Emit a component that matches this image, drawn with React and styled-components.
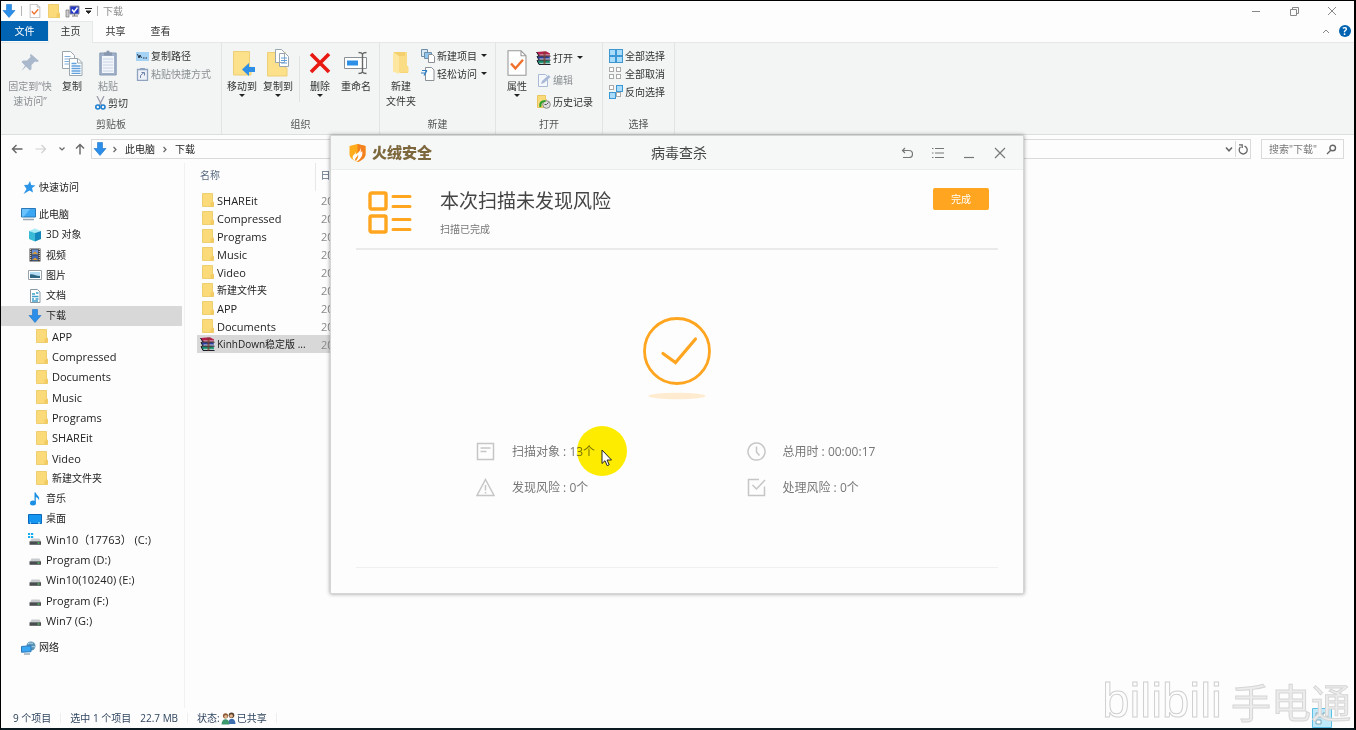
import React from "react"
import styled, { createGlobalStyle } from "styled-components"

const GlobalStyle = createGlobalStyle`
  * { box-sizing: border-box; }
  body { margin: 0; background: #000; }
  button, input {
    font: inherit;
    color: inherit;
    border: 0;
    padding: 0;
    background: none;
  }
  ul { list-style: none; margin: 0; padding: 0; }
  h1, h2, p { margin: 0; font-weight: 400; }
  svg { display: block; flex: none; }
`

const Screen = styled.div`
  position: relative;
  display: flex;
  flex-direction: column;
  min-height: 100vh;
  background: #fdfdfd;
  border: 1px solid #000;
  border-right-width: 2px;
  border-bottom: 2px solid #0b1a20;
  color: #222;
  font: 10px/15px "Open Sans", "Noto Sans CJK SC", sans-serif;
`

/* title bar */

const TitleBar = styled.header`
  display: flex;
  align-items: center;
  height: 20px;
  padding: 0 16px 0 1px;
`

const QuickTools = styled.div`
  display: flex;
  align-items: center;
  flex: 1;
  gap: 5px;
`

const Bar = styled.span`
  width: 1px;
  height: 10px;
  background: #b5b5b5;
`

const WindowTitle = styled.h1`
  font-size: 10px;
  line-height: 15px;
  color: #8c8c8c;
`

const WindowButtons = styled.div`
  display: flex;
  gap: 26px;
  color: #888;
`

const IconButton = styled.button`
  display: flex;
  align-items: center;
  justify-content: center;
  min-width: ${p => p.$w || 12}px;
  height: ${p => p.$h || 16}px;
`

/* ribbon */

const TabRow = styled.nav`
  display: flex;
  align-items: flex-start;
  height: 22px;
  padding-right: 3px;
  border-bottom: 1px solid #e6e8e8;
`

const Tab = styled.button`
  width: ${p => (p.$file ? 47 : 45)}px;
  height: ${p => (p.$active ? 22 : 20)}px;
  padding-bottom: ${p => (p.$active ? 2 : 0)}px;
  color: ${p => (p.$file ? "#fff" : "#333")};
  background: ${p => (p.$file ? "#0063b1" : p.$active ? "#f3f5f5" : "none")};
  border: solid #e6e8e8;
  border-width: ${p => (p.$active ? "1px 1px 0" : "0")};
`

const TabTools = styled.div`
  display: flex;
  align-items: center;
  height: 20px;
  gap: 7px;
  margin-left: auto;
  color: #888;
`

const Help = styled.button`
  width: 12px;
  height: 12px;
  line-height: 12px;
  border-radius: 50%;
  background: #0063b1;
  color: #fff;
  font-weight: 700;
`

const Ribbon = styled.section`
  display: flex;
  height: 92px;
  background: #f3f5f5;
  border-bottom: 1px solid #dcdede;
`

const Group = styled.div`
  display: flex;
  flex-direction: column;
  min-width: ${p => p.$w}px;
  padding: 4px 0 2px;
  border-right: 1px solid #e2e4e4;
`

const GroupBody = styled.div`
  display: flex;
  flex: 1;
  align-items: flex-start;
  padding-left: ${p => p.$pad || 2}px;
`

const GroupName = styled.div`
  text-align: center;
  color: #555;
`

const BigButton = styled.button`
  display: flex;
  flex-direction: column;
  align-items: center;
  width: ${p => p.$w || 36}px;
  color: ${p => (p.$off ? "#8a8f92" : "#333")};
  white-space: nowrap;
`

const BigIcon = styled.span`
  display: flex;
  align-items: center;
  justify-content: center;
  height: 32px;
`

const SmallColumn = styled.div`
  display: flex;
  flex-direction: column;
`

const SmallButton = styled.button`
  display: flex;
  align-items: center;
  gap: 2px;
  height: ${p => p.$h || 18}px;
  padding-left: ${p => p.$pad || 0}px;
  color: ${p => (p.$off ? "#8a8f92" : "#333")};
  white-space: nowrap;
  & > span + svg { margin-left: 2px; }
`

const RibbonRule = styled.span`
  width: 1px;
  height: 46px;
  margin: 9px 2px 0 3px;
  background: #e0e2e2;
`

/* address row */

const AddressRow = styled.div`
  display: flex;
  align-items: center;
  height: 28px;
  padding: 0 10px;
  color: #666;
`

const NavButtons = styled.div`
  display: flex;
  align-items: center;
  gap: 9px;
  width: 80px;
`

const AddressBox = styled.div`
  display: flex;
  flex: 1;
  align-items: center;
  height: 20px;
  padding-left: 1px;
  border: 1px solid #dadada;
  & > svg + svg { margin-left: 6px; }
`

const Crumb = styled.a`
  color: #222;
  text-decoration: none;
  margin: 0 8px;
`

const AddressTools = styled.div`
  display: flex;
  margin-left: auto;
  & > button + button { border-left: 1px solid #dadada; }
`

const SearchBox = styled.label`
  display: flex;
  align-items: center;
  width: 83px;
  height: 20px;
  margin-left: 10px;
  padding: 0 6px 0 7px;
  border: 1px solid #dadada;
  input {
    flex: 1;
    min-width: 0;
    outline: 0;
  }
  input::placeholder { color: #777; opacity: 1; }
`

/* explorer body */

const Explorer = styled.main`
  display: flex;
  flex: 1;
`

const Sidebar = styled.ul`
  display: flex;
  flex-direction: column;
  width: 184px;
  padding: 14px 2px 50px 0;
  border-right: 1px solid #f1f1f1;
`

const TreeItem = styled.li`
  display: flex;
  flex: 1;
  align-items: center;
  gap: ${p => (p.$level ? 4 : 3)}px;
  min-height: 20px;
  margin-top: ${p => (p.$group ? 7 : 0)}px;
  padding-left: ${p => [20, 27, 35][p.$level]}px;
  font-size: ${p => (p.$latin ? 11 : 10)}px;
  background: ${p => (p.$active ? "#d8d8d8" : "none")};
  white-space: nowrap;
`

const FileTable = styled.table`
  flex: 0 1 620px;
  align-self: flex-start;
  table-layout: fixed;
  border-collapse: collapse;
  margin-left: 12px;
  th {
    height: 28px;
    padding: 0 0 4px 3px;
    font-weight: 400;
    text-align: left;
    color: #5a6b80;
  }
  th + th { padding-left: 5px; border-left: 1px solid #e8e8e8; }
  td { height: 18px; padding: 0 0 0 3px; color: #888; font-size: 11px; }
  td + td { padding-left: 6px; }
  col:first-child { width: 118px; }
`

const FileRow = styled.tr`
  background: ${p => (p.$active ? "#d8d8d8" : "none")};
`

const FileName = styled.span`
  display: flex;
  align-items: center;
  gap: 2px;
  height: 18px;
  color: #222;
  font-size: ${p => (p.$latin ? 11 : 10)}px;
  white-space: nowrap;
`

const FileIcon = styled.span`
  display: flex;
  justify-content: center;
  width: 15px;
`

const StatusBar = styled.footer`
  display: flex;
  align-items: center;
  gap: 9px;
  height: 20px;
  padding-left: 12px;
  color: #30455f;
  ${Bar} { background: #eee; }
`

const Share = styled.span`
  display: flex;
  align-items: center;
  gap: 1px;
`

/* antivirus window */

const DialogLayer = styled.div`
  position: absolute;
  inset: 0;
  display: flex;
  align-items: flex-start;
  justify-content: center;
  padding: 134px 1px 0 0;
`

const Dialog = styled.section`
  flex: 0 1 694px;
  background: #fdfdfd;
  border: 1px solid #d4d6d6;
  box-shadow: 0 0 4px rgba(0, 0, 0, 0.4);
`

const DialogBar = styled.header`
  display: grid;
  grid-template-columns: 1fr auto 1fr;
  align-items: center;
  height: 34px;
  padding: 0 14px 0 18px;
  background: #f6f8f8;
  border-bottom: 1px solid #eceeee;
`

const Brand = styled.div`
  display: flex;
  align-items: center;
  gap: 6px;
  font-size: 15px;
  font-weight: 900;
  color: #7d673c;
`

const DialogTitle = styled.h2`
  font-size: 14px;
  line-height: 20px;
  color: #444;
`

const DialogButtons = styled.div`
  display: flex;
  justify-content: flex-end;
  gap: 13px;
  color: #777;
`

const Summary = styled.div`
  display: flex;
  align-items: flex-start;
  margin: 0 25px;
  padding: 18px 9px 11px 12px;
  border-bottom: 2px solid #eaeaea;
`

const SummaryIcon = styled.div`
  padding-top: 3px;
`

const SummaryText = styled.div`
  flex: 1;
  margin-left: 28px;
  h2 { font-size: 19px; line-height: 26px; color: #444; }
  p { margin-top: 8px; color: #777; }
`

const DoneButton = styled.button`
  width: 56px;
  height: 22px;
  border-radius: 2px;
  background: #ffa51f;
  color: #fff;
`

const Result = styled.div`
  display: flex;
  justify-content: center;
  padding: 66px 0 33px;
`

const Stats = styled.ul`
  display: grid;
  grid-template-columns: 1fr 1fr;
  margin: 0 6px 0 145px;
`

const Stat = styled.li`
  display: flex;
  align-items: center;
  gap: 17px;
  height: 36px;
  font-size: 12px;
  color: #777;
`

const DialogFoot = styled.footer`
  height: 26px;
  margin: 62px 25px 0;
  border-top: 1px solid #f0f0f0;
`

const Pointer = styled.div`
  position: absolute;
  left: 576px;
  top: 425px;
  width: 50px;
  height: 50px;
  border-radius: 50%;
  background: #ffee00;
  mix-blend-mode: multiply;
`

const Arrow = styled.div`
  position: absolute;
  left: 600px;
  top: 448px;
`

const Watermark = styled.div`
  position: absolute;
  right: 3px;
  bottom: 0;
  display: flex;
  align-items: flex-end;
  gap: 9px;
  white-space: nowrap;
`

const WatermarkLogo = styled.span`
  font: 49px/56px "Liberation Sans", sans-serif;
  color: #fdfdfd;
  -webkit-text-stroke: 1px #d0d0d0;
`

const WatermarkName = styled.span`
  font: 40px/48px "Liberation Sans", "Noto Sans CJK SC", sans-serif;
  color: #ececec;
  -webkit-text-stroke: 1px #d6d6d6;
`

const ViewToggle = styled.div`
  position: absolute;
  right: 22px;
  bottom: 0;
`

/* icons */

const Line = ({ d, w = 12, h = 12, sw = 1, color = "currentColor", fill = "none" }) => (
  <svg width={w} height={h} viewBox={`0 0 ${w} ${h}`} fill={fill} stroke={color} strokeWidth={sw}>
    <path d={d} />
  </svg>
)

const Caret = () => (
  <svg width="6" height="4" viewBox="0 0 6 4"><path d="M0 0h6L3 3z" fill="#222" /></svg>
)

const DownArrow = () => (
  <svg width="14" height="14" viewBox="0 0 14 14">
    <path d="M4.5 .5h5v6H13L7 13.500 1 6.500h3.500z" fill="#2b8ee8" stroke="#1d74c8" strokeWidth=".6" />
  </svg>
)

const Folder = () => (
  <svg width="12" height="14" viewBox="0 0 12 14">
    <path d="M.5.500h10v8.500h1v4.500H.5z" fill="#fbdb79" stroke="#e9c65e" strokeWidth=".8" />
    <path d="M8.500 9.500h3v4h-3z" fill="#f3ca62" />
  </svg>
)

const Books = () => (
  <svg width="15" height="14" viewBox="0 0 15 14">
    <path d="M.5 1L10 .3l4 2.200v2.500H3z" fill="#b3204d" />
    <path d="M1 5.500h11l2 1v2H3z" fill="#2b3fa0" />
    <path d="M1 9.500h11l2 1v3H3z" fill="#128a6a" />
    <path d="M3.500 4h10.500M3.500 8h10.500M3.500 12.300h10.500" stroke="#e8e8e8" strokeWidth=".9" />
    <path d="M.5 1l2.500 4-2 .5 2 3.500-2 .5 2 4M3 5.200h11.500M3 9.200h11.500M3 13.500h11.500" stroke="#1c1c28" strokeWidth="1" fill="none" />
    <path d="M7.500 .5l2 .5v12.500h-2z" fill="#7a3f2a" opacity=".7" />
  </svg>
)

const CheckDoc = ({ w = 12, h = 14 }) => (
  <svg width={w} height={h} viewBox="0 0 18 24">
    <path d="M.7.700h12l4.600 4.600v18H.7z" fill="#fff" stroke="#999" />
    <path d="M12.700.700v4.600h4.600" fill="none" stroke="#999" />
    <path d="M3.500 12.500l4 4.500 7-8" fill="none" stroke="#f0702a" strokeWidth="2.200" />
  </svg>
)

const PcCheck = () => (
  <svg width="15" height="13" viewBox="0 0 15 13">
    <path d="M1 5h3v7H1z" fill="#ccc" stroke="#777" strokeWidth=".7" />
    <path d="M5 1h9v8H5z" fill="#2438c8" stroke="#889" />
    <path d="M7 11h6M9.500 9v2" stroke="#777" />
    <path d="M7 4.500l2 2.500 3.500-4.500" fill="none" stroke="#fff" strokeWidth="1.400" />
  </svg>
)

const Pin = () => (
  <svg width="20" height="20" viewBox="0 0 20 20">
    <path d="M11 1l8 7-2 1-2-.5-3.500 3.500 0 4-1.500 1.500-4-4L1 18.500 1.500 18 5 12.500l-3.500-3.500L3 7.500h4L10.500 4l-.5-2z" fill="#aab8cb" />
  </svg>
)

const Copies = ({ w = 21, h = 25 }) => (
  <svg width={w} height={h} viewBox="0 0 21 25">
    <path d="M.5.500h8l4 4v13H.5z" fill="#fff" stroke="#9aa6ae" />
    <path d="M2.500 5.500h6M2.500 8h8M2.500 10.500h8M2.500 13h8" stroke="#7fb0dd" />
    <path d="M7.500 7.500h8.500l4 4v13H7.500z" fill="#fff" stroke="#9aa6ae" />
    <path d="M15.500 7.500v4.500h4.500" fill="none" stroke="#9aa6ae" />
    <path d="M9.500 12.500h5M9.500 15h9M9.500 17.500h9M9.500 20h9M9.500 22.300h9" stroke="#5fa0dd" strokeWidth="1.300" />
  </svg>
)

const Clipboard = () => (
  <svg width="18" height="26" viewBox="0 0 18 26">
    <path d="M.8 3h16.400v22H.8z" fill="#9fb0c8" stroke="#8b9cb5" />
    <path d="M3 6h12v17H3z" fill="#f2f5fa" />
    <path d="M5 5.500V2.500h2.500V.800h3v1.700H13v3z" fill="#8796ad" />
    <path d="M4 9h10M4 12h10M4 15h10M4 18h10M4 21h10" stroke="#c9d4e4" />
  </svg>
)

const Scissors = () => (
  <svg width="11" height="14" viewBox="0 0 11 14" fill="none">
    <path d="M2 0l4.500 9M9 0L4.500 9" stroke="#99a" strokeWidth="1.200" />
    <circle cx="2.800" cy="11" r="2" stroke="#1f7fd0" strokeWidth="1.600" />
    <circle cx="8" cy="11" r="2" stroke="#1f7fd0" strokeWidth="1.600" />
  </svg>
)

const PathIcon = () => (
  <svg width="13" height="9" viewBox="0 0 13 9">
    <path d="M0 0h13v9H0z" fill="#a5d3f5" />
    <path d="M1.500 2l1.500 4 1-3 1.500 3M7 6h1.500M9.500 6H11" stroke="#234" fill="none" />
  </svg>
)

const PasteLink = () => (
  <svg width="13" height="13" viewBox="0 0 13 13">
    <path d="M1.500 1.500h10v11h-10z" fill="#eef2f8" stroke="#8fa2c0" strokeWidth="1.300" />
    <path d="M4 0h5v2H4z" fill="#8fa2c0" />
    <path d="M4.500 10V7.500l3.500-3M5.500 4.500H8.500v3" fill="none" stroke="#6a83ad" />
  </svg>
)

const MoveTo = () => (
  <svg width="26" height="26" viewBox="0 0 26 26">
    <path d="M4.500 1.500h16v15.500h1.500v8H4.500z" fill="#fce08a" stroke="#edcf77" />
    <path d="M26 17h-6v-4l-7 6.500 7 6.500v-4h6z" fill="#2d8fe6" />
  </svg>
)

const CopyTo = () => (
  <svg width="26" height="28" viewBox="0 0 26 28">
    <path d="M2.500 3.500h18v15.500h1.500v8H2.500z" fill="#fce08a" stroke="#edcf77" />
    <path d="M10.500.500h6l3 3v10h-9zM14.500 4.500h6l3 3v10h-9z" fill="#fff" stroke="#98a6b2" />
    <path d="M16 9h6M16 11.500h6M16 14h6" stroke="#5fa0dd" />
  </svg>
)

const Rename = () => (
  <svg width="26" height="24" viewBox="0 0 26 24" fill="none">
    <path d="M1.500 6.500h22v11h-22z" fill="#fff" stroke="#8a9096" />
    <path d="M4 9.500h11v5H4z" fill="#2d8fe6" />
    <path d="M15.500 1.500c2.500 0 3.500.5 4 1.500.5-1 1.500-1.500 4-1.500M19.500 3v18M15.500 22.500c2.500 0 3.500-.5 4-1.500.5 1 1.500 1.500 4 1.500" stroke="#666" strokeWidth="1.400" />
  </svg>
)

const NewFolder = () => (
  <svg width="18" height="24" viewBox="0 0 18 24">
    <path d="M2 1h13v14h1v7H8z" fill="#f3cf6e" />
    <path d="M1 1l6 4v18l-6-2.500z" fill="#fde7a0" />
    <path d="M7 5h6V1h2v14l1.500 1v5.500H7z" fill="#f9dc84" />
  </svg>
)

const NewItem = () => (
  <svg width="14" height="14" viewBox="0 0 14 14">
    <path d="M.5.500h6v7h-6z" fill="#d5e9f8" stroke="#6f8ea5" />
    <path d="M3.500 3.500h7v6h-7z" fill="#8cc6f0" stroke="#6f8ea5" />
    <path d="M7.500 5.500h4l2 2v6h-6z" fill="#fff" stroke="#8a9096" />
  </svg>
)

const EasyAccess = () => (
  <svg width="14" height="14" viewBox="0 0 14 14">
    <path d="M4.500.500h6l2.500 2.500v10.500H4.500z" fill="#fff" stroke="#8a9096" />
    <path d="M0 6h4M1 3.500h5M3 8.500l3-5" stroke="#2d7fc8" strokeWidth="1.200" />
  </svg>
)

const Edit = () => (
  <svg width="14" height="14" viewBox="0 0 14 14">
    <path d="M1.500 1.500h7l2 2v10h-9z" fill="#f4f7fc" stroke="#a9b9d6" />
    <path d="M4 11l1-3 6.500-6 2 2-6.500 6z" fill="#a9b9d6" />
  </svg>
)

const HistoryIcon = () => (
  <svg width="14" height="14" viewBox="0 0 14 14">
    <path d="M.5.500h8v4h1v8H.5z" fill="#fbdb79" stroke="#e9c65e" />
    <circle cx="9.500" cy="9.500" r="3.800" fill="#ddd" stroke="#888" />
    <path d="M9.500 9.500l2-2M9.500 9.500h-2" stroke="#555" fill="none" />
    <path d="M3.500 12c-1-4 1-6 5-6" stroke="#2ca02c" strokeWidth="2.200" fill="none" />
  </svg>
)

const Squares = ({ on }) => (
  <svg width="14" height="14" viewBox="0 0 14 14">
    {[[1, 1], [8, 1], [1, 8], [8, 8]].map(([x, y], i) => (
      <rect key={i} x={x - 0.5} y={y - 0.5} width={on[i] ? 6 : 4} height={on[i] ? 6 : 4}
        fill={on[i] ? "#a9dbfa" : "#fff"} stroke={on[i] ? "#3c97d3" : "#aaa"} />
    ))}
  </svg>
)

const Monitor = () => (
  <svg width="15" height="14" viewBox="0 0 15 14">
    <path d="M.5 1.500h14v8.500H.5z" fill="#3ba7f2" stroke="#2a78b8" />
    <path d="M1 2h8L3 9.500H1z" fill="#6cc2fa" />
    <path d="M2 12.500h11" stroke="#9aa6b0" strokeWidth="1.500" />
  </svg>
)

const Star = () => (
  <svg width="15" height="14" viewBox="0 0 15 14">
    <path d="M9 1l1.200 4 4.300.5-3.500 2.500 1 4.500-3.500-2-6 3.500 3-5L3 5l4-.2z" fill="#2d95e8" />
  </svg>
)

const Cube = () => (
  <svg width="14" height="14" viewBox="0 0 14 14">
    <path d="M1 3l6-2.500L13 3 7 5z" fill="#a8ebf5" />
    <path d="M1 3l6 2v8.500L1 11z" fill="#39bbd8" />
    <path d="M13 3L7 5v8.500l6-2.500z" fill="#1488bd" />
  </svg>
)

const Film = () => (
  <svg width="14" height="14" viewBox="0 0 14 14">
    <path d="M1.500.500h11v13h-11z" fill="#444" />
    <path d="M4 1.500h6v5H4z" fill="#6b8fd0" />
    <path d="M4 7.500h6v5H4z" fill="#3e63b0" />
    <path d="M4 6l3-2.500L10 6zM4 12l3-2.500 3 2.500z" fill="#d49b35" />
    <path d="M2.700 1v12M11.300 1v12" stroke="#ddd" strokeDasharray="1 1" />
  </svg>
)

const Picture = () => (
  <svg width="14" height="14" viewBox="0 0 14 14">
    <path d="M.5 2.500h13v9H.5z" fill="#fff" stroke="#98a2aa" />
    <path d="M2 4h10v6H2z" fill="#b5def5" />
    <path d="M2 6.500c3-1 5 1.500 10 1.500v2H2z" fill="#2e6784" />
  </svg>
)

const DocIcon = () => (
  <svg width="14" height="14" viewBox="0 0 14 14">
    <path d="M2.500.500h7l2.500 2.500v10.500H2.500z" fill="#fff" stroke="#8a98a4" />
    <path d="M4 5h3M8 4h2.500M4 7.500h6.500M4 10h2M7.500 10h3M4 12h6" stroke="#3f9fca" strokeWidth="1.300" />
  </svg>
)

const Note = () => (
  <svg width="14" height="14" viewBox="0 0 14 14">
    <ellipse cx="5" cy="11" rx="3" ry="2.500" fill="#1a8fe3" />
    <path d="M6.500 11V.500h1.300c.5 3 4.500 3.500 3.200 8-.5-2-1.500-3-3.200-3.500v6z" fill="#1a8fe3" />
  </svg>
)

const Desktop = () => (
  <svg width="14" height="14" viewBox="0 0 14 14">
    <path d="M.5 2.500h13v9H.5z" fill="#1596f0" stroke="#0a69b8" />
    <path d="M2 11h1M10 11h2" stroke="#dff" />
  </svg>
)

const Drive = ({ win }) => (
  <svg width="14" height="14" viewBox="0 0 14 14">
    <path d="M3.500 6.500h8l1.500 3H2z" fill="#c8cbcd" />
    <path d="M1.500 9.300h11.500v3.500H1.500z" fill="#4a4d50" />
    <path d="M9.500 11h2" stroke="#52d36a" strokeWidth="1.200" />
    {win && <path d="M0 1h2.200v2H0zM3 1h2.200v2H3zM0 4h2.200v2H0zM3 4h2.200v2H3z" fill="#18aef0" />}
  </svg>
)

const Network = () => (
  <svg width="15" height="14" viewBox="0 0 15 14">
    <circle cx="10" cy="5" r="4.500" fill="#5d93b5" />
    <path d="M7 3c2-2 3 0 5-1M9 6c2 0 3-1 5 0" stroke="#bfe0ee" fill="none" />
    <path d="M.5 5.500l9.500-.8v6l-9.500.5z" fill="#3ba7f2" stroke="#2a78b8" />
    <path d="M3 13h6" stroke="#8fa6b5" strokeWidth="1.400" />
  </svg>
)

const People = () => (
  <svg width="15" height="13" viewBox="0 0 15 13">
    <circle cx="4.500" cy="3.800" r="2.600" fill="#8a5a36" />
    <circle cx="10.500" cy="3.300" r="2.800" fill="#59422f" />
    <circle cx="10.200" cy="4" r="1.800" fill="#e2b48d" />
    <circle cx="4.800" cy="4.500" r="1.600" fill="#e2b48d" />
    <path d="M7 12c0-7 7.500-7 7.500 0z" fill="#3d6fae" />
    <path d="M.5 12.500c0-7 8-7 8 0z" fill="#3c9a6e" />
  </svg>
)

const Shield = () => (
  <svg width="17" height="18" viewBox="0 0 17 18">
    <path d="M8.500 0L16.500 2v8c0 4-4 6.500-8 8-4-1.500-8-4-8-8V2z" fill="#ffad1c" />
    <path d="M8.500 0L16.500 2v8c0 4-4 6.500-8 8z" fill="#f4811f" />
    <path d="M12 3c.3 3-.5 4-.3 5.500.8-.2 1.200-1 1.200-2 1.500 4-.5 8-5.400 11.300C4 16 3.500 14 3.700 12.500 4.500 10.500 6 10.500 6.500 8c.4 1.500.2 2 .2 2.500C9 9 12 6.500 12 3z" fill="#fff" />
    <path d="M6 16c0-2 2.500-3.500 3-5.500.8 2-.5 4.500-2 6.500z" fill="#f79322" />
  </svg>
)

const ScanList = () => (
  <svg width="44" height="44" viewBox="0 0 44 44" fill="none" stroke="#ffa51f" strokeLinecap="round">
    <rect x="2" y="2" width="16" height="16" rx="1.500" strokeWidth="3.400" />
    <rect x="2" y="25" width="16" height="16" rx="1.500" strokeWidth="3.400" />
    <path d="M25 5.500h17M25 15.500h17M25 28.500h17M25 38.500h17" strokeWidth="3" />
  </svg>
)

const SuccessMark = () => (
  <svg width="70" height="84" viewBox="0 0 70 84" fill="none">
    <circle cx="35" cy="35" r="32.500" stroke="#ffa51f" strokeWidth="2.800" />
    <path d="M21 37.500L33.500 46.500 53.500 23" stroke="#ffa51f" strokeWidth="3.200" strokeLinecap="round" />
    <ellipse cx="35" cy="80" rx="28.500" ry="3.300" fill="#ffecd0" />
  </svg>
)

const StatIcon = ({ d }) => (
  <svg width="19" height="19" viewBox="0 0 19 19" fill="none" stroke="#c6c6c6" strokeWidth="1.500">
    <path d={d} />
  </svg>
)

/* data */

const tree = [
  [0, "快速访问", Star],
  [0, "此电脑", Monitor],
  [1, "3D 对象", Cube],
  [1, "视频", Film],
  [1, "图片", Picture],
  [1, "文档", DocIcon],
  [1, "下载", DownArrow],
  [2, "APP", Folder],
  [2, "Compressed", Folder],
  [2, "Documents", Folder],
  [2, "Music", Folder],
  [2, "Programs", Folder],
  [2, "SHAREit", Folder],
  [2, "Video", Folder],
  [2, "新建文件夹", Folder],
  [1, "音乐", Note],
  [1, "桌面", Desktop],
  [1, "Win10（17763） (C:)", () => <Drive win />],
  [1, "Program (D:)", Drive],
  [1, "Win10(10240) (E:)", Drive],
  [1, "Program (F:)", Drive],
  [1, "Win7 (G:)", Drive],
  [0, "网络", Network],
]

const files = [
  "SHAREit", "Compressed", "Programs", "Music", "Video",
  "新建文件夹", "APP", "Documents", "KinhDown稳定版 ...",
]

const stats = [
  ["扫描对象 : 13个", "M1.500 1.500h16v16h-16zM4.500 6h10M4.500 9.500h6"],
  ["总用时 : 00:00:17", "M9.500 1a8.500 8.500 0 1 0 .01 0zM9.500 4.500v5.500l3 3.500"],
  ["发现风险 : 0个", "M9.500 1.500l8.500 16h-17zM9.500 7v5.500M9.500 14v1.500"],
  ["处理风险 : 0个", "M12 1.500H1.500v16h16V8.500M5.500 7l4 4L18 2"],
]

const isLatin = text => /^[A-Za-z]/.test(text)

function Big({ icon, lines, caret, w, off }) {
  return (
    <BigButton $w={w} $off={off}>
      <BigIcon>{icon}</BigIcon>
      {lines.map(line => <span key={line}>{line}</span>)}
      {caret && <Caret />}
    </BigButton>
  )
}

function Small({ icon, text, caret, ...rest }) {
  return (
    <SmallButton {...rest}>
      {icon}
      <span>{text}</span>
      {caret && <Caret />}
    </SmallButton>
  )
}

function RibbonBar() {
  return (
    <Ribbon>
      <Group $w={221}>
        <GroupBody $pad={6}>
          <Big icon={<Pin />} lines={["固定到“快", "速访问”"]} w={46} off />
          <Big icon={<Copies />} lines={["复制"]} w={38} />
          <SmallColumn>
            <Big icon={<Clipboard />} lines={["粘贴"]} w={34} off />
            <Small icon={<Scissors />} text="剪切" $pad={4} />
          </SmallColumn>
          <SmallColumn>
            <Small icon={<PathIcon />} text="复制路径" $pad={8} />
            <Small icon={<PasteLink />} text="粘贴快捷方式" $pad={8} $off />
          </SmallColumn>
        </GroupBody>
        <GroupName>剪贴板</GroupName>
      </Group>
      <Group $w={158}>
        <GroupBody>
          <Big icon={<MoveTo />} lines={["移动到"]} caret />
          <Big icon={<CopyTo />} lines={["复制到"]} caret />
          <RibbonRule />
          <Big icon={<Line w={22} h={22} d="M2 2l18 18M20 2L2 20" sw={3.6} color="#e81a12" />} lines={["删除"]} caret />
          <Big icon={<Rename />} lines={["重命名"]} />
        </GroupBody>
        <GroupName>组织</GroupName>
      </Group>
      <Group $w={116}>
        <GroupBody>
          <Big icon={<NewFolder />} lines={["新建", "文件夹"]} w={38} />
          <SmallColumn>
            <Small icon={<NewItem />} text="新建项目" caret $pad={1} />
            <Small icon={<EasyAccess />} text="轻松访问" caret $pad={1} />
          </SmallColumn>
        </GroupBody>
        <GroupName>新建</GroupName>
      </Group>
      <Group $w={107}>
        <GroupBody>
          <Big icon={<CheckDoc w={20} h={26} />} lines={["属性"]} caret w={38} />
          <SmallColumn>
            <Small icon={<Books />} text="打开" caret $h={22} />
            <Small icon={<Edit />} text="编辑" $h={22} $pad={1} $off />
            <Small icon={<HistoryIcon />} text="历史记录" $h={22} $pad={1} />
          </SmallColumn>
        </GroupBody>
        <GroupName>打开</GroupName>
      </Group>
      <Group $w={72}>
        <GroupBody $pad={6}>
          <SmallColumn>
            <Small icon={<Squares on={[1, 1, 1, 1]} />} text="全部选择" />
            <Small icon={<Squares on={[0, 0, 0, 0]} />} text="全部取消" />
            <Small icon={<Squares on={[0, 1, 1, 0]} />} text="反向选择" />
          </SmallColumn>
        </GroupBody>
        <GroupName>选择</GroupName>
      </Group>
    </Ribbon>
  )
}

function ScanDialog() {
  return (
    <DialogLayer>
      <Dialog>
        <DialogBar>
          <Brand><Shield />火绒安全</Brand>
          <DialogTitle>病毒查杀</DialogTitle>
          <DialogButtons>
            <IconButton $w={18} aria-label="返回"><Line w={12} h={12} d="M4 1L1.500 3.500 4 6M1.500 3.500h6.500a3.300 3.300 0 0 1 0 7H2" sw={1.2} /></IconButton>
            <IconButton $w={18} aria-label="菜单"><Line w={12} h={12} d="M0 1.500h1.500M3 1.500h9M0 6h1.500M3 6h9M0 10.500h1.500M3 10.500h9" sw={1.2} /></IconButton>
            <IconButton $w={18} aria-label="最小化"><Line w={12} h={12} d="M1 10.500h10" sw={1.2} /></IconButton>
            <IconButton $w={18} aria-label="关闭"><Line w={12} h={12} d="M1 1l10 10M11 1L1 11" sw={1.2} /></IconButton>
          </DialogButtons>
        </DialogBar>
        <Summary>
          <SummaryIcon><ScanList /></SummaryIcon>
          <SummaryText>
            <h2>本次扫描未发现风险</h2>
            <p>扫描已完成</p>
          </SummaryText>
          <DoneButton>完成</DoneButton>
        </Summary>
        <Result><SuccessMark /></Result>
        <Stats>
          {stats.map(([text, d]) => (
            <Stat key={text}><StatIcon d={d} />{text}</Stat>
          ))}
        </Stats>
        <DialogFoot />
      </Dialog>
    </DialogLayer>
  )
}

export default function App() {
  return (
    <Screen>
      <GlobalStyle />
      <TitleBar>
        <QuickTools>
          <DownArrow />
          <Bar />
          <IconButton $w={16} aria-label="属性"><CheckDoc /></IconButton>
          <IconButton aria-label="新建文件夹"><Folder /></IconButton>
          <IconButton aria-label="计算机"><PcCheck /></IconButton>
          <IconButton $w={7} aria-label="自定义"><Line w={7} h={6} d="M0 .5h7M1 3h5L3.500 5.500z" fill="#222" color="#222" /></IconButton>
          <Bar />
          <WindowTitle>下载</WindowTitle>
        </QuickTools>
        <WindowButtons>
          <IconButton aria-label="最小化"><Line d="M2 6.500h8" /></IconButton>
          <IconButton aria-label="还原"><Line d="M2.500 4.500h6v6h-6zM4.500 4.500v-2h6v6h-2" /></IconButton>
          <IconButton aria-label="关闭"><Line d="M2 2l8 8M10 2l-8 8" /></IconButton>
        </WindowButtons>
      </TitleBar>
      <TabRow>
        <Tab $file>文件</Tab>
        <Tab $active>主页</Tab>
        <Tab>共享</Tab>
        <Tab>查看</Tab>
        <TabTools>
          <IconButton aria-label="折叠"><Line w={8} h={5} d="M1 4l3-3 3 3" /></IconButton>
          <Help>?</Help>
        </TabTools>
      </TabRow>
      <RibbonBar />
      <AddressRow>
        <NavButtons>
          <IconButton aria-label="后退"><Line d="M11.500 6H1.500M5.500 2l-4 4 4 4" sw={1.4} /></IconButton>
          <IconButton $w={18} aria-label="前进"><Line d="M.5 6h10M6.500 2l4 4-4 4" sw={1.2} color="#d0d0d0" /></IconButton>
          <IconButton $w={6} aria-label="历史"><Line w={6} h={4} d="M.5.500L3 3 5.500.500" sw={1.2} /></IconButton>
          <IconButton aria-label="上移"><Line d="M6 11.500V1.500M2 5.500l4-4 4 4" sw={1.4} /></IconButton>
        </NavButtons>
        <AddressBox>
          <DownArrow />
          <Line w={4} h={7} d="M.5 1L3 3.500.5 6" sw={1.2} />
          <Crumb href="#pc">此电脑</Crumb>
          <Line w={4} h={7} d="M.5 1L3 3.500.5 6" sw={1.2} />
          <Crumb href="#downloads">下载</Crumb>
          <AddressTools>
            <IconButton aria-label="展开"><Line w={8} h={5} d="M1 .5L4 3.800 7 .5" sw={1.5} /></IconButton>
            <IconButton $w={15} aria-label="刷新"><Line w={10} h={11} d="M2.500 3a4 4 0 1 0 4-.8M1 .8h3.200v3.200" sw={1.3} /></IconButton>
          </AddressTools>
        </AddressBox>
        <SearchBox>
          <input type="text" aria-label="搜索" placeholder={'搜索"下载"'} />
          <Line w={11} h={11} d="M4.500 6.500L1 10M9.500 4a2.800 2.800 0 1 1-5.600 0 2.800 2.800 0 0 1 5.600 0z" sw={1.4} />
        </SearchBox>
      </AddressRow>
      <Explorer>
        <Sidebar>
          {tree.map(([level, text, Icon], i) => (
            <TreeItem key={i} $level={level} $group={i > 0 && level === 0} $active={text === "下载"} $latin={isLatin(text)}>
              <Icon />
              {text}
            </TreeItem>
          ))}
        </Sidebar>
        <FileTable>
          <colgroup><col /><col /></colgroup>
          <thead>
            <tr><th>名称</th><th>日</th></tr>
          </thead>
          <tbody>
            {files.map((name, i) => (
              <FileRow key={name} $active={i === 8}>
                <td>
                  <FileName $latin={isLatin(name) && i < 8}>
                    <FileIcon>{i === 8 ? <Books /> : <Folder />}</FileIcon>
                    {name}
                  </FileName>
                </td>
                <td>20</td>
              </FileRow>
            ))}
          </tbody>
        </FileTable>
      </Explorer>
      <StatusBar>
        <span>9 个项目</span>
        <Bar />
        <span>选中 1 个项目</span>
        <span>22.7 MB</span>
        <Bar />
        <Share>状态:<People />已共享</Share>
        <Bar />
      </StatusBar>
      <ViewToggle>
        <svg width="20" height="20" viewBox="0 0 20 20">
          <path d="M.5.500h19v19H.5z" fill="#bfe8f8" stroke="#5cc0e6" />
          <path d="M4 5h5v4H4zM11 5h5v4h-5zM4 12h5v4H4z" fill="#fff" stroke="#7aa6b8" />
        </svg>
      </ViewToggle>
      <Watermark>
        <WatermarkLogo>bilibili</WatermarkLogo>
        <WatermarkName>手电通</WatermarkName>
      </Watermark>
      <ScanDialog />
      <Pointer />
      <Arrow>
        <svg width="12" height="18" viewBox="0 0 12 18">
          <path d="M1 1v13.500l3-2.800 2.200 5 2-.9-2.100-4.800h4.400z" fill="#fff" stroke="#222" />
        </svg>
      </Arrow>
    </Screen>
  )
}
